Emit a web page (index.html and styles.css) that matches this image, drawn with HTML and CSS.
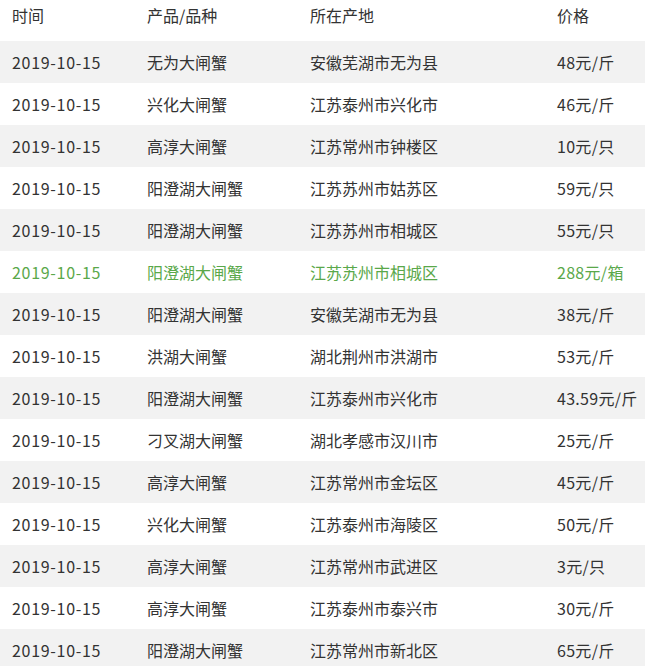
FILE: index.html
```html
<!DOCTYPE html>
<html lang="zh-CN">
<head>
<meta charset="utf-8">
<title>价格</title>
<link rel="stylesheet" href="styles.css">
</head>
<body>
<div class="table">
  <div class="row head"><span class="c1">时间</span><span class="c2">产品/品种</span><span class="c3">所在产地</span><span class="c4">价格</span></div>
  <div class="row odd"><span class="c1">2019-10-15</span><span class="c2">无为大闸蟹</span><span class="c3">安徽芜湖市无为县</span><span class="c4">48元/斤</span></div>
  <div class="row"><span class="c1">2019-10-15</span><span class="c2">兴化大闸蟹</span><span class="c3">江苏泰州市兴化市</span><span class="c4">46元/斤</span></div>
  <div class="row odd"><span class="c1">2019-10-15</span><span class="c2">高淳大闸蟹</span><span class="c3">江苏常州市钟楼区</span><span class="c4">10元/只</span></div>
  <div class="row"><span class="c1">2019-10-15</span><span class="c2">阳澄湖大闸蟹</span><span class="c3">江苏苏州市姑苏区</span><span class="c4">59元/只</span></div>
  <div class="row odd"><span class="c1">2019-10-15</span><span class="c2">阳澄湖大闸蟹</span><span class="c3">江苏苏州市相城区</span><span class="c4">55元/只</span></div>
  <div class="row hl"><span class="c1">2019-10-15</span><span class="c2">阳澄湖大闸蟹</span><span class="c3">江苏苏州市相城区</span><span class="c4">288元/箱</span></div>
  <div class="row odd"><span class="c1">2019-10-15</span><span class="c2">阳澄湖大闸蟹</span><span class="c3">安徽芜湖市无为县</span><span class="c4">38元/斤</span></div>
  <div class="row"><span class="c1">2019-10-15</span><span class="c2">洪湖大闸蟹</span><span class="c3">湖北荆州市洪湖市</span><span class="c4">53元/斤</span></div>
  <div class="row odd"><span class="c1">2019-10-15</span><span class="c2">阳澄湖大闸蟹</span><span class="c3">江苏泰州市兴化市</span><span class="c4">43.59元/斤</span></div>
  <div class="row"><span class="c1">2019-10-15</span><span class="c2">刁叉湖大闸蟹</span><span class="c3">湖北孝感市汉川市</span><span class="c4">25元/斤</span></div>
  <div class="row odd"><span class="c1">2019-10-15</span><span class="c2">高淳大闸蟹</span><span class="c3">江苏常州市金坛区</span><span class="c4">45元/斤</span></div>
  <div class="row"><span class="c1">2019-10-15</span><span class="c2">兴化大闸蟹</span><span class="c3">江苏泰州市海陵区</span><span class="c4">50元/斤</span></div>
  <div class="row odd"><span class="c1">2019-10-15</span><span class="c2">高淳大闸蟹</span><span class="c3">江苏常州市武进区</span><span class="c4">3元/只</span></div>
  <div class="row"><span class="c1">2019-10-15</span><span class="c2">高淳大闸蟹</span><span class="c3">江苏泰州市泰兴市</span><span class="c4">30元/斤</span></div>
  <div class="row odd"><span class="c1">2019-10-15</span><span class="c2">阳澄湖大闸蟹</span><span class="c3">江苏常州市新北区</span><span class="c4">65元/斤</span></div>
</div>
</body>
</html>
```
FILE: styles.css
```css
html, body {
  margin: 0;
  padding: 0;
  background: #fff;
}
.table {
  width: 645px;
  font-family: "Noto Sans CJK SC", "Noto Sans", sans-serif;
  font-size: 16px;
  color: #333;
}
.row {
  display: grid;
  grid-template-columns: 135px 163px 247px 1fr;
  height: 42px;
  align-items: center;
  padding-left: 12px;
  white-space: nowrap;
}
.row.head {
  height: 41px;
  align-items: start;
  padding-top: 3px;
  box-sizing: border-box;
}
.row:not(.head) .c1 {
  letter-spacing: 0.7px;
}
.row:not(.head) .c4 {
  letter-spacing: 0.3px;
}
.row.odd {
  background: #f2f2f2;
}
.row.hl {
  color: #5aa84a;
}
```
